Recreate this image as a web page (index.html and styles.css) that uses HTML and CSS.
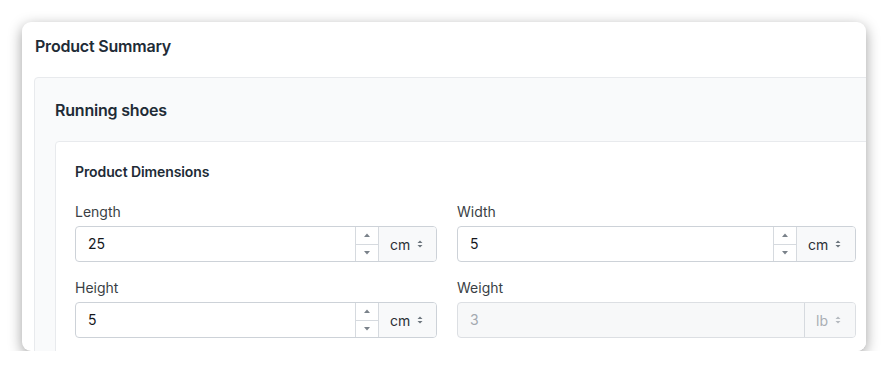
FILE: index.html
```html
<!DOCTYPE html>
<html>
<head>
<meta charset="utf-8">
<link rel="stylesheet" href="styles.css">
</head>
<body>
<div class="card">
  <h1 class="card-title">Product Summary</h1>
  <div class="panel">
    <h2 class="panel-title">Running shoes</h2>
    <div class="inner">
      <h3 class="inner-title">Product Dimensions</h3>
      <div class="grid">
        <div class="field">
          <label class="label">Length</label>
          <div class="group">
            <div class="value">25</div>
            <div class="spin">
              <span class="spin-btn"><svg width="6" height="4" viewBox="0 0 6 4"><path d="M0 4 L3 0.5 L6 4Z" fill="#7a828a"/></svg></span>
              <span class="spin-btn"><svg width="6" height="4" viewBox="0 0 6 4"><path d="M0 0 L3 3.5 L6 0Z" fill="#7a828a"/></svg></span>
            </div>
            <div class="unit">cm <svg class="chev" width="6" height="10" viewBox="0 0 6 10"><path d="M0.5 4 L3 1.5 L5.5 4Z M0.5 6 L3 8.5 L5.5 6Z" fill="#6c757d"/></svg></div>
          </div>
        </div>
        <div class="field">
          <label class="label">Width</label>
          <div class="group">
            <div class="value">5</div>
            <div class="spin">
              <span class="spin-btn"><svg width="6" height="4" viewBox="0 0 6 4"><path d="M0 4 L3 0.5 L6 4Z" fill="#7a828a"/></svg></span>
              <span class="spin-btn"><svg width="6" height="4" viewBox="0 0 6 4"><path d="M0 0 L3 3.5 L6 0Z" fill="#7a828a"/></svg></span>
            </div>
            <div class="unit unit-wide">cm <svg class="chev" width="6" height="10" viewBox="0 0 6 10"><path d="M0.5 4 L3 1.5 L5.5 4Z M0.5 6 L3 8.5 L5.5 6Z" fill="#6c757d"/></svg></div>
          </div>
        </div>
        <div class="field">
          <label class="label">Height</label>
          <div class="group">
            <div class="value">5</div>
            <div class="spin">
              <span class="spin-btn"><svg width="6" height="4" viewBox="0 0 6 4"><path d="M0 4 L3 0.5 L6 4Z" fill="#7a828a"/></svg></span>
              <span class="spin-btn"><svg width="6" height="4" viewBox="0 0 6 4"><path d="M0 0 L3 3.5 L6 0Z" fill="#7a828a"/></svg></span>
            </div>
            <div class="unit">cm <svg class="chev" width="6" height="10" viewBox="0 0 6 10"><path d="M0.5 4 L3 1.5 L5.5 4Z M0.5 6 L3 8.5 L5.5 6Z" fill="#6c757d"/></svg></div>
          </div>
        </div>
        <div class="field">
          <label class="label">Weight</label>
          <div class="group disabled">
            <div class="value">3</div>
            <div class="unit unit-lb">lb <svg class="chev" width="6" height="10" viewBox="0 0 6 10"><path d="M0.5 4 L3 1.5 L5.5 4Z M0.5 6 L3 8.5 L5.5 6Z" fill="#b4b9bf"/></svg></div>
          </div>
        </div>
      </div>
    </div>
  </div>
</div>
</body>
</html>
```

FILE: styles.css
```css
html, body {
  margin: 0;
  padding: 0;
  background: #ffffff;
}
body {
  padding: 22px 23px 0 22px;
  font-family: Inter, "Liberation Sans", sans-serif;
  color: #212b36;
}
.card {
  width: 844px;
  height: 329px;
  box-sizing: border-box;
  background: #fff;
  border-radius: 9px;
  box-shadow: 0 4px 14px rgba(0, 0, 0, 0.38);
  overflow: hidden;
  padding: 12px 0 0 12px;
}
.card-title {
  margin: 0 0 19px 1px;
  font-size: 16px;
  line-height: 24px;
  font-weight: 600;
  letter-spacing: -0.2px;
  color: #212b36;
}
.panel {
  width: 880px;
  background: #f9fafb;
  border: 1px solid #e8eaed;
  border-radius: 4px;
  padding: 20px 0 0 20px;
}
.panel-title {
  margin: 0 0 19px 0;
  font-size: 16px;
  line-height: 24px;
  font-weight: 600;
  letter-spacing: -0.2px;
  color: #212b36;
}
.inner {
  background: #fff;
  border: 1px solid #e8eaed;
  border-radius: 4px;
  padding: 20px 19px 30px 19px;
}
.inner-title {
  margin: 0 0 20px 0;
  font-size: 14px;
  line-height: 20px;
  font-weight: 600;
  letter-spacing: -0.1px;
  color: #212b36;
}
.grid {
  display: grid;
  grid-template-columns: 362px 399px;
  column-gap: 20px;
  row-gap: 16px;
}
.field {
  display: flex;
  flex-direction: column;
}
.label {
  font-size: 14px;
  line-height: 20px;
  color: #3a3f45;
  margin-bottom: 4px;
}
.group {
  display: flex;
  height: 36px;
  box-sizing: border-box;
  border: 1px solid #cdd2d8;
  border-radius: 4px;
  overflow: hidden;
  background: #fff;
}
.value {
  flex: 1;
  padding-left: 12px;
  font-size: 14px;
  line-height: 34px;
  color: #16191d;
}
.spin {
  width: 22px;
  border-left: 1px solid #d6dadf;
  display: flex;
  flex-direction: column;
}
.spin-btn {
  flex: 1;
  display: flex;
  align-items: center;
  justify-content: center;
}
.spin-btn + .spin-btn {
  border-top: 1px solid #d6dadf;
}
.unit {
  width: 58px;
  border-left: 1px solid #d6dadf;
  background: #f8f9fa;
  display: flex;
  align-items: center;
  padding-left: 11px;
  box-sizing: border-box;
  font-size: 14px;
  color: #2b3036;
}
.unit-wide {
  width: 59px;
}
.unit-lb {
  width: 51px;
  padding-left: 11px;
}
.chev {
  margin-left: 7px;
}
.disabled {
  background: #f7f8f9;
  border-color: #dcdfe3;
}
.disabled .value {
  color: #a3a9b0;
}
.disabled .unit {
  color: #a9aeb4;
  background: #f7f8f9;
}
```
